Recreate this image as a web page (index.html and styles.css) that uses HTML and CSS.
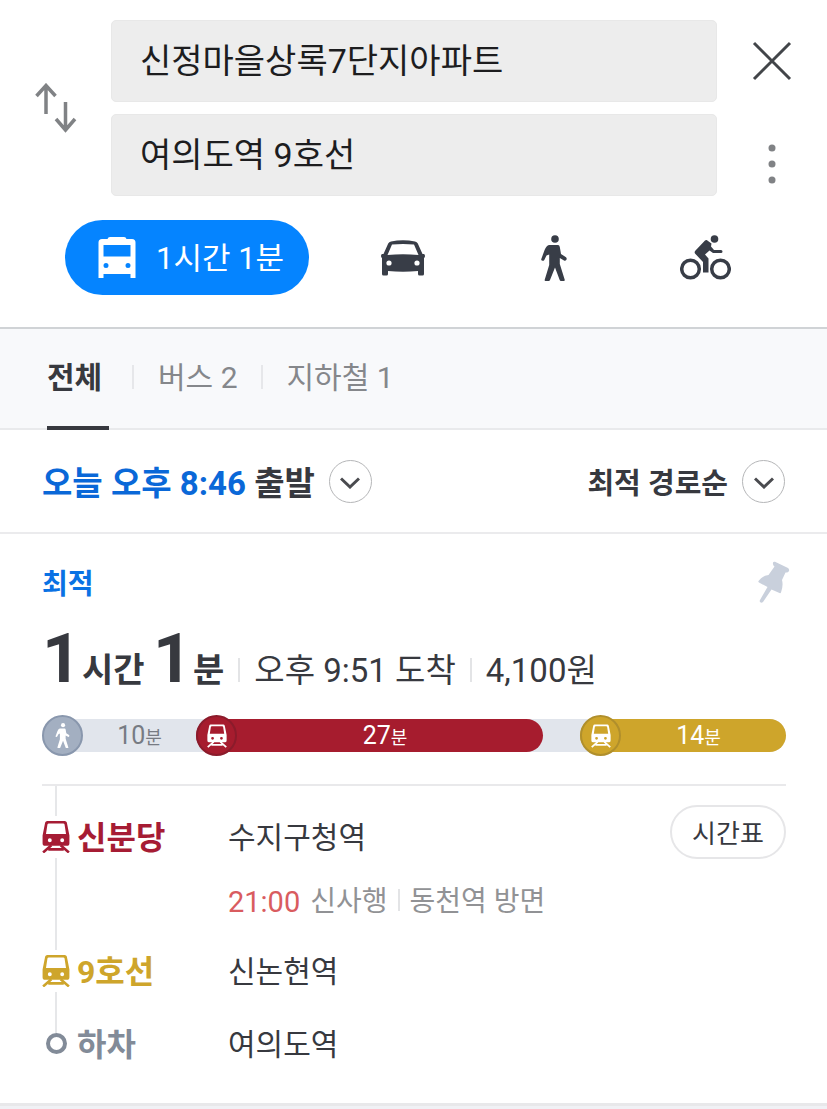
FILE: index.html
```html
<!DOCTYPE html>
<html lang="ko">
<head>
<meta charset="utf-8">
<meta name="viewport" content="width=device-width, initial-scale=1">
<title>길찾기</title>
<link rel="stylesheet" href="styles.css">
</head>
<body>
<svg class="sprite" aria-hidden="true">
  <symbol id="train" viewBox="0 0 27 31">
    <path fill="currentColor" fill-rule="evenodd" d="M5 0H22Q23.500 0 24 1.500L26.500 14V21.500Q26.500 24 24 24H3Q.5 24 .5 21.500V14L3 1.500Q3.500 0 5 0ZM6.500 2.500Q5.500 2.500 5.200 3.500L3.800 12.500H23.200L21.800 3.500Q21.500 2.500 20.500 2.500ZM7.500 16.800A1.900 1.900 0 1 0 7.500 20.600 1.900 1.900 0 1 0 7.500 16.800ZM19.500 16.800A1.900 1.900 0 1 0 19.500 20.600 1.900 1.900 0 1 0 19.500 16.800Z"/>
    <path fill="none" stroke="currentColor" stroke-width="2.500" d="M9 23.500 1 30.500M18 23.500 26 30.500M6 27.500H21"/>
  </symbol>
  <symbol id="walker" viewBox="0 0 26 46">
    <circle cx="14" cy="4" r="3.800" fill="currentColor"/>
    <path fill="currentColor" d="M8 10H17Q18.500 10 18.800 12L20 19 25 22.300Q26.300 23.600 25.200 25Q24.400 26 23 25.400L18.800 23V29L23.800 45Q23.800 46 22.800 46H20Q19 46 18.700 45L14 32.500 9 45Q8.600 46 7.800 46H4.500Q3.400 46 3.700 44.800L8.200 30V19.500L5.500 20.500 3.300 25Q2.300 26.300 1 25.600Q-.2 25 .4 23.700L3.600 15Q5.500 10.500 8 10Z"/>
  </symbol>
  <symbol id="chevron" viewBox="0 0 20 12">
    <path fill="none" stroke="currentColor" stroke-width="3" d="M1 1.500 10 10 19 1.500"/>
  </symbol>
</svg>

<header class="search">
  <div class="search__fields">
    <button class="icon-button search__swap" type="button" aria-label="출발지와 도착지 바꾸기">
      <svg width="42" height="50" viewBox="0 0 42 50" fill="none" stroke="currentColor" stroke-width="3.500"><path d="M11 31V3M1.500 13 11 2.500 20.500 13M30.500 19V47M21 36 30.500 47 40 36"/></svg>
    </button>
    <form class="search__form">
      <input class="search__input" type="text" aria-label="출발지" value="신정마을상록7단지아파트">
      <input class="search__input" type="text" aria-label="도착지" value="여의도역 9호선">
    </form>
    <div class="search__side">
      <button class="icon-button search__close" type="button" aria-label="닫기">
        <svg width="40" height="40" viewBox="0 0 40 40" fill="none" stroke="currentColor" stroke-width="3"><path d="M2 2 38 38M38 2 2 38"/></svg>
      </button>
      <button class="icon-button search__more" type="button" aria-label="더보기">
        <svg width="8" height="40" viewBox="0 0 8 40" fill="currentColor"><circle cx="4" cy="4" r="3.500"/><circle cx="4" cy="20" r="3.500"/><circle cx="4" cy="36" r="3.500"/></svg>
      </button>
    </div>
  </div>
  <nav class="modes" aria-label="이동 수단">
    <button class="modes__transit" type="button">
      <svg width="38" height="42" viewBox="0 0 38 42" fill="currentColor"><path fill-rule="evenodd" d="M12 0H26Q28 0 28.500 2H34Q37.500 2 37.500 5.500V41H32.500V37H5.500V41H.5V5.500Q.5 2 4 2H9.500Q10 0 12 0ZM5.500 8V19.500H32.500V8ZM8 26A2.500 2.500 0 1 0 8 31 2.500 2.500 0 1 0 8 26ZM30 26A2.500 2.500 0 1 0 30 31 2.500 2.500 0 1 0 30 26Z"/></svg>
      <span class="modes__label">1시간 1분</span>
    </button>
    <button class="modes__item" type="button" aria-label="자동차">
      <svg width="44" height="36" viewBox="0 0 44 36" fill="currentColor"><path fill-rule="evenodd" d="M10 1.500Q22-.8 34 1.500 36 2 36.800 3.500L41.500 14H43Q44 14.500 44 16 44 17.500 43 18V34Q43 35.500 41.500 35.500H38.500Q37 35.500 37 34V31Q22 32.500 7 31V34Q7 35.500 5.500 35.500H2.500Q1 35.500 1 34V18Q0 17.500 0 16 0 14.500 1 14H2.500L7.200 3.500Q8 2 10 1.500ZM11 4.500 6.500 15Q22 13.500 37.500 15L33 4.500Q22 3.300 11 4.500ZM8 20.400A2.600 2.600 0 1 0 8 25.600 2.600 2.600 0 1 0 8 20.400ZM36 20.400A2.600 2.600 0 1 0 36 25.600 2.600 2.600 0 1 0 36 20.400Z"/></svg>
    </button>
    <button class="modes__item" type="button" aria-label="도보">
      <svg width="26" height="46"><use href="#walker"/></svg>
    </button>
    <button class="modes__item" type="button" aria-label="자전거">
      <svg width="51" height="45" viewBox="0 0 51 45"><g fill="none" stroke="currentColor" stroke-width="3.500"><circle cx="10.500" cy="34" r="8.800"/><circle cx="40.500" cy="34" r="8.800"/></g><circle cx="34.500" cy="4" r="3.800" fill="currentColor"/><path fill="currentColor" d="M25 5.500Q26.500 4.500 28 6L31.500 8.500 31 11.500 34 15H41Q42.500 15 42.500 16.500 42.500 18 41 18H33L29.500 15.500 25 19.500 28.500 23.500V37.500H23V27L15 18.500Q14 17 15.500 15.500Z"/></svg>
    </button>
  </nav>
</header>

<nav class="tabs" aria-label="경로 종류">
  <a class="tabs__link tabs__link--active" href="#all" aria-current="page">전체</a>
  <a class="tabs__link" href="#bus">버스 2</a>
  <a class="tabs__link" href="#subway">지하철 1</a>
</nav>

<div class="filters">
  <button class="filters__button" type="button">
    <span><span class="filters__time">오늘 오후 8:46</span> 출발</span>
    <span class="filters__ring"><svg width="20" height="12"><use href="#chevron"/></svg></span>
  </button>
  <button class="filters__button filters__button--sort" type="button">
    <span>최적 경로순</span>
    <span class="filters__ring"><svg width="20" height="12"><use href="#chevron"/></svg></span>
  </button>
</div>

<main class="route">
  <div class="route__top">
    <strong class="route__tag">최적</strong>
    <button class="icon-button route__pin" type="button" aria-label="고정">
      <svg width="32" height="42" viewBox="0 0 32 42" fill="currentColor"><path d="M15 1.500Q15.500 .3 17 .8L30 7Q31.500 8 31 10 30 12 27.500 11.500L24 19Q25.500 24.500 23 31.500 22.500 32.500 21.500 32L13.500 28.500 5 41Q3.500 42.300 2.300 41.300 1.300 40.500 2 39L9.500 26 1 21.500Q0 21 .5 20 4.500 14.500 10.500 14L16.500 5.500Q14.500 4 15 1.500Z"/></svg>
    </button>
  </div>
  <div class="route__summary">
    <h1 class="route__duration"><span class="route__number">1</span>시간 <span class="route__number">1</span>분</h1>
    <span class="route__fact">오후 9:51 도착</span>
    <span class="route__fact">4,100원</span>
  </div>

  <div class="track">
    <div class="track__leg track__leg--walk" style="flex-grow:154">
      <span class="track__dot"><svg width="15" height="25"><use href="#walker"/></svg></span>
      <span class="track__time">10<small>분</small></span>
    </div>
    <div class="track__leg track__leg--sinbundang" style="flex-grow:347">
      <span class="track__dot"><svg width="20" height="24"><use href="#train"/></svg></span>
      <span class="track__time">27<small>분</small></span>
    </div>
    <div class="track__leg" style="flex-grow:37"></div>
    <div class="track__leg track__leg--line9" style="flex-grow:206">
      <span class="track__dot"><svg width="20" height="24"><use href="#train"/></svg></span>
      <span class="track__time">14<small>분</small></span>
    </div>
  </div>

  <ol class="steps">
    <li class="step step--first">
      <div class="step__rail"><span class="step__lead"></span><svg class="step__icon step__icon--sinbundang" width="28" height="32"><use href="#train"/></svg><span class="step__line"></span></div>
      <strong class="step__name step__name--sinbundang">신분당</strong>
      <div class="step__body">
        <p class="step__station">수지구청역</p>
        <p class="step__next"><span class="step__clock">21:00</span><span>신사행</span><span class="step__toward">동천역 방면</span></p>
      </div>
      <button class="step__timetable" type="button">시간표</button>
    </li>
    <li class="step">
      <div class="step__rail"><svg class="step__icon step__icon--line9" width="28" height="32"><use href="#train"/></svg><span class="step__line"></span></div>
      <strong class="step__name step__name--line9">9호선</strong>
      <div class="step__body"><p class="step__station">신논현역</p></div>
    </li>
    <li class="step step--last">
      <div class="step__rail"><span class="step__stop"></span></div>
      <strong class="step__name step__name--off">하차</strong>
      <div class="step__body"><p class="step__station">여의도역</p></div>
    </li>
  </ol>
</main>
</body>
</html>
```
FILE: styles.css
```css
* {
  box-sizing: border-box;
}

body {
  margin: 0;
  min-height: 100vh;
  background: #f0f1f5;
  color: #37393f;
  font-family: Roboto, "Noto Sans CJK KR", sans-serif;
}

button,
input {
  font: inherit;
  color: inherit;
}

button {
  padding: 0;
  border: 0;
  background: none;
}

svg {
  display: block;
  flex: none;
}

.sprite {
  position: absolute;
  width: 0;
  height: 0;
}

.icon-button {
  display: flex;
  align-items: center;
  justify-content: center;
}

/* Search header */
.search {
  padding: 20px 0 32px;
  background: #fff;
  border-bottom: 2px solid #d0d3d6;
}

.search__fields {
  display: grid;
  grid-template-columns: 111px minmax(0, 1fr) 110px;
}

.search__swap {
  color: #808285;
}

.search__form,
.search__side {
  display: grid;
  grid-template-rows: 82px 82px;
  gap: 12px;
}

.search__input {
  width: 100%;
  padding: 0 28px 6px;
  border: 1px solid #e8e8e8;
  border-radius: 5px;
  background: #ededed;
  color: #1d1d1f;
  font-size: 34px;
}

.search__close {
  color: #424549;
}

.search__more {
  padding-top: 18px;
  color: #808285;
}

.modes {
  display: flex;
  align-items: center;
  margin-top: 24px;
  padding: 0 46px 0 65px;
}

.modes__transit {
  display: flex;
  align-items: center;
  gap: 20px;
  height: 75px;
  margin-right: 18px;
  padding: 0 25px 0 33px;
  border-radius: 38px;
  background: #0584ff;
  color: #fff;
  font-size: 31px;
  white-space: nowrap;
}

.modes__label {
  padding-bottom: 4px;
}

.modes__item {
  display: flex;
  flex: 1;
  align-items: center;
  justify-content: center;
  height: 75px;
  color: #383d47;
}

/* Tabs */
.tabs {
  display: flex;
  padding: 0 47px;
  height: 101px;
  background: #f8f9fb;
  border-bottom: 2px solid #e9eaec;
}

.tabs__link {
  display: flex;
  align-items: center;
  padding-bottom: 8px;
  color: #85878b;
  font-size: 30px;
  text-decoration: none;
}

.tabs__link + .tabs__link::before {
  content: "";
  width: 2px;
  height: 24px;
  margin: 4px 24px 0 23px;
  background: #e6e7ea;
}

.tabs__link--active {
  width: 62px;
  margin-bottom: -2px;
  padding-bottom: 6px;
  border-bottom: 4px solid #37393f;
  color: #37393f;
  font-weight: 700;
}

/* Departure time and sort order */
.filters {
  display: flex;
  align-items: center;
  justify-content: space-between;
  height: 104px;
  padding: 0 42px;
  background: #fff;
  border-bottom: 2px solid #ebebed;
}

.filters__button {
  display: flex;
  align-items: center;
  gap: 14px;
  font-size: 33px;
  font-weight: 700;
}

.filters__button--sort {
  font-size: 29px;
}

.filters__time {
  color: #0a68d8;
}

.filters__ring {
  display: flex;
  align-items: center;
  justify-content: center;
  width: 43px;
  height: 43px;
  padding-top: 3px;
  border: 1px solid #b5b6b8;
  border-radius: 50%;
  color: #4a4b4f;
}

/* Route card */
.route {
  padding: 27px 41px 46px 42px;
  background: #fff;
  border-bottom: 3px solid #e8e8ea;
}

.route__top {
  display: flex;
  align-items: center;
  justify-content: space-between;
  height: 42px;
}

.route__tag {
  color: #0a72e4;
  font-size: 28px;
}

.route__pin {
  margin-right: -4px;
  color: #c9d0dc;
}

.route__summary {
  display: flex;
  align-items: baseline;
  height: 80px;
  margin-top: 16px;
  line-height: 80px;
  white-space: nowrap;
}

.route__duration {
  margin: 0;
  font-size: 34px;
  font-weight: 700;
}

.route__number {
  margin-right: 1px;
  font-size: 68px;
}

.route__fact {
  font-size: 33px;
}

.route__fact::before {
  content: "";
  display: inline-block;
  width: 2px;
  height: 24px;
  margin: 0 14px;
  background: #e3e4e6;
}

/* Proportional time track */
.track {
  display: flex;
  height: 33px;
  margin-top: 20px;
  border-radius: 17px;
  background: #e1e5ec;
}

.track__leg {
  display: flex;
  flex: 0 1 0;
  align-items: center;
  min-width: 0;
  border-radius: 17px;
  color: #fff;
}

.track__dot {
  display: flex;
  flex: none;
  align-items: center;
  justify-content: center;
  width: 41px;
  height: 41px;
  border: 2px solid #8b1b2b;
  border-radius: 50%;
  background: inherit;
}

.track__time {
  flex: 1;
  padding: 2px 10px 0 0;
  font-size: 25px;
  line-height: 33px;
  text-align: center;
}

.track__time small {
  font-size: 18px;
}

.track__leg--walk .track__dot {
  border-color: #8997ad;
  background: #a3afc1;
}

.track__leg--walk .track__time {
  padding-right: 0;
  color: #777b83;
}

.track__leg--sinbundang {
  background: #a61c2e;
}

.track__leg--line9 {
  background: #cea52b;
}

.track__leg--line9 .track__dot {
  border-color: #b08f2c;
}

/* Step list */
.steps {
  margin: 32px 0 0;
  padding: 0;
  border-top: 2px solid #e9e9eb;
  list-style: none;
}

.step {
  display: grid;
  grid-template-columns: 28px 158px minmax(0, 1fr) auto;
  min-height: 83px;
}

.step--first {
  min-height: 164px;
}

.step--last {
  min-height: 22px;
}

.step__rail {
  display: flex;
  flex-direction: column;
  align-items: center;
}

.step__lead,
.step__line {
  width: 2px;
  background: #e6e7e9;
}

.step__lead {
  height: 30px;
}

.step__line {
  flex: 1;
}

.step__icon {
  margin: 5px 0;
}

.step__icon--sinbundang,
.step__name--sinbundang {
  color: #a61c34;
}

.step__icon--line9,
.step__name--line9 {
  color: #cea52b;
}

.step__stop {
  width: 21px;
  height: 21px;
  border: 4px solid #828b98;
  border-radius: 50%;
}

.step__name {
  padding-left: 7px;
  font-size: 32px;
  line-height: 44px;
}

.step__name--off {
  color: #828b98;
}

.step__station,
.step__next {
  margin: 0;
  font-size: 30px;
  line-height: 44px;
}

.step__next {
  display: flex;
  align-items: center;
  margin-top: 20px;
  color: #919295;
  font-size: 28px;
}

.step__clock {
  margin-right: 10px;
  color: #d95c5f;
  font-size: 29px;
}

.step__toward::before {
  content: "";
  display: inline-block;
  width: 2px;
  height: 22px;
  margin: 0 10px;
  background: #e3e4e6;
}

.step--first .step__name,
.step--first .step__body {
  padding-top: 30px;
}

.step--last .step__name,
.step--last .step__station {
  line-height: 24px;
}

.step__timetable {
  align-self: start;
  width: 116px;
  height: 54px;
  margin-top: 19px;
  padding-bottom: 2px;
  border: 2px solid #e6e6e8;
  border-radius: 27px;
  font-size: 26px;
}
```
